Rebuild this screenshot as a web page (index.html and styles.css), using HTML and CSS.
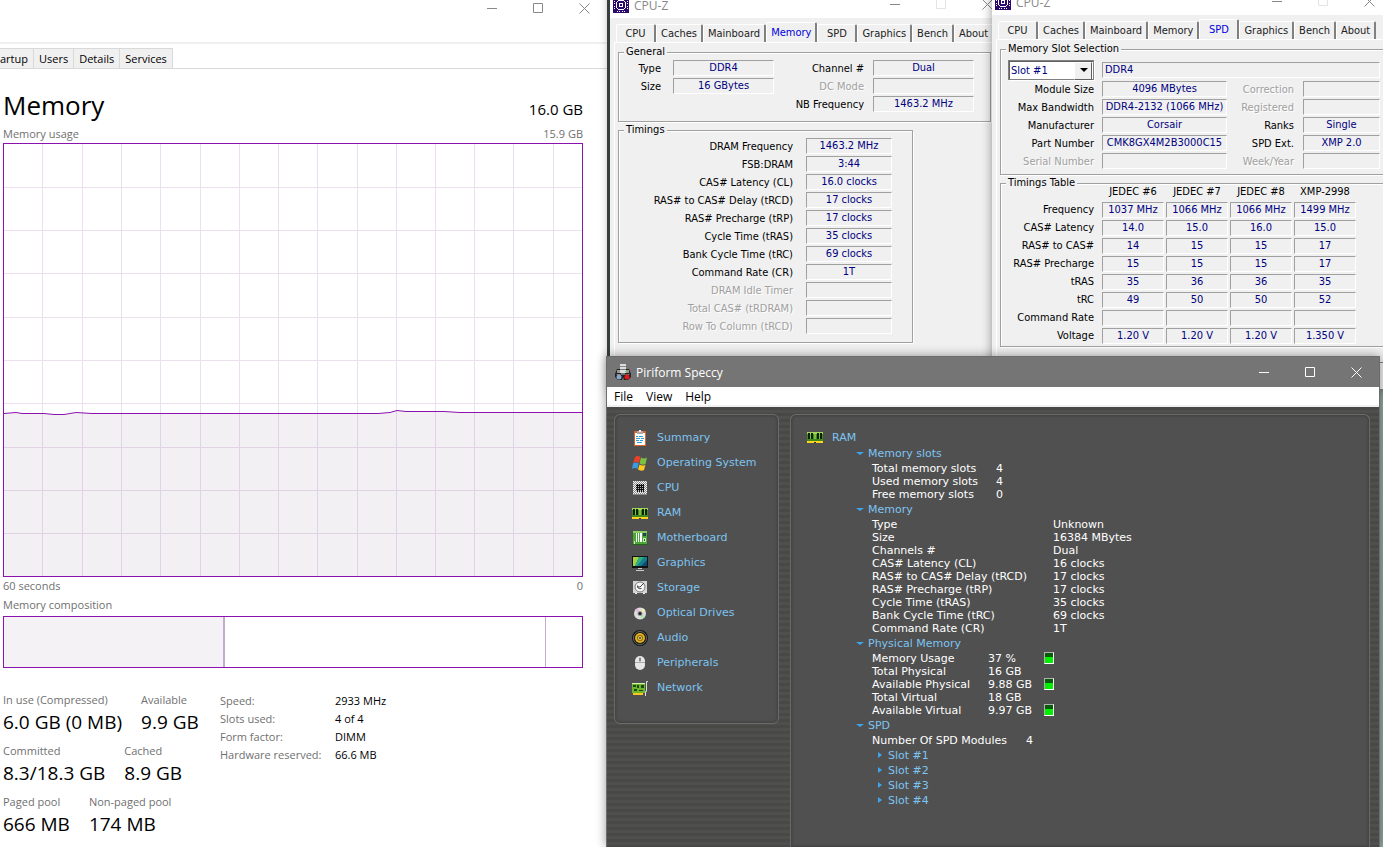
FILE: index.html
```html
<!DOCTYPE html>
<html lang="en">
<head>
    <meta charset="UTF-8">
    <meta name="viewport" content="width=device-width, initial-scale=1.0">
    <title>Memory</title>
    <link rel="stylesheet" href="styles.css">
</head>
<body>
<svg class="defs" aria-hidden="true">
    <symbol id="ram" viewBox="0 0 16 16">
        <path fill="#3f8a1e" d="M0 3h16v9H0z"/>
        <path fill="#a4d45a" d="M0 3h16v2H0z"/>
        <path fill="#7cc03e" d="M3 5h1v5H3zM7 5h2v5H7zM12 5h1v5h-1z"/>
        <path fill="#0d2008" d="M1 4h2v6H1zM4 4h2v6H4zM10 4h2v6h-2zM13 4h2v6h-2z"/>
        <path fill="#ffd21c" d="M0 12h16v2H0z"/>
        <path fill="#333" d="M7 13h2v1H7z"/>
    </symbol>
    <symbol id="chip" viewBox="0 0 16 16">
        <path fill="#2b0a6b" d="M0 0h16v16H0z"/>
        <path fill="#fff" d="M5 3h6v1H5zM5 12h6v1H5zM3 5h1v6H3zM12 5h1v6h-1zM4 4h1v1H4zM11 4h1v1h-1zM4 11h1v1H4zM11 11h1v1h-1z"/>
        <path fill="#fff" d="M6 6h4v4H6z"/>
        <path fill="#2b0a6b" d="M7 7h2v2H7z"/>
        <path fill="#fff" d="M4 1h1v1H4zM6 1h1v1H6zM9 1h1v1H9zM11 1h1v1h-1zM4 14h1v1H4zM6 14h1v1H6zM9 14h1v1H9zM11 14h1v1h-1zM1 4h1v1H1zM1 6h1v1H1zM1 9h1v1H1zM1 11h1v1H1zM14 4h1v1h-1zM14 6h1v1h-1zM14 9h1v1h-1zM14 11h1v1h-1z"/>
    </symbol>
    <symbol id="min" viewBox="0 0 11 11"><path stroke="currentColor" d="M0 5.500h10"/></symbol>
    <symbol id="max" viewBox="0 0 11 11"><path fill="none" stroke="currentColor" d="M.5.5h9v9h-9z"/></symbol>
    <symbol id="close" viewBox="0 0 11 11"><path stroke="currentColor" d="M.5.5l10 10M10.500.5l-10 10"/></symbol>
</svg>

<main class="desktop">
    <!-- Task manager -->
    <section class="window taskmgr">
        <div class="captions">
            <button class="caption" aria-label="Minimize"><svg><use href="#min"/></svg></button>
            <button class="caption" aria-label="Maximize"><svg><use href="#max"/></svg></button>
            <button class="caption" aria-label="Close"><svg><use href="#close"/></svg></button>
        </div>
        <nav class="tm-tabs">
            <button class="tm-tab first">artup</button>
            <button class="tm-tab">Users</button>
            <button class="tm-tab">Details</button>
            <button class="tm-tab">Services</button>
        </nav>
        <div class="tm-body">
            <header class="tm-head"><h1>Memory</h1><span>16.0 GB</span></header>
            <div class="tm-caption"><span>Memory usage</span><span>15.9 GB</span></div>
            <svg class="chart" viewBox="0 0 578 432" preserveAspectRatio="none">
                <path class="grid" d="M38.500 0v432M78.500 0v432M117.500 0v432M156.500 0v432M196.500 0v432M235.500 0v432M274.500 0v432M313.500 0v432M353.500 0v432M392.500 0v432M431.500 0v432M470.500 0v432M509.500 0v432M549.500 0v432M0 43.500h578M0 86.500h578M0 129.500h578M0 173.500h578M0 216.500h578M0 259.500h578M0 303.500h578M0 346.500h578M0 389.500h578"/>
                <path class="area" d="M0 269.500L12 268.500 18 269.500H40L50 270.500H60L72 268.500 88 269.500H374L386 268.500 393 266.500 402 267.500H440L456 268.500H578V432H0z"/>
                <path class="line" d="M0 269.500L12 268.500 18 269.500H40L50 270.500H60L72 268.500 88 269.500H374L386 268.500 393 266.500 402 267.500H440L456 268.500H578"/>
            </svg>
            <div class="tm-caption"><span>60 seconds</span><span>0</span></div>
            <div class="tm-caption below"><span>Memory composition</span></div>
            <div class="composition"><i class="used"></i><i class="standby"></i><i class="free"></i></div>
            <div class="tm-details">
                <div class="stats">
                    <div class="stat-row">
                        <p><span>In use (Compressed)</span><b>6.0 GB (0 MB)</b></p>
                        <p><span>Available</span><b>9.9 GB</b></p>
                    </div>
                    <div class="stat-row">
                        <p><span>Committed</span><b>8.3/18.3 GB</b></p>
                        <p><span>Cached</span><b>8.9 GB</b></p>
                    </div>
                    <div class="stat-row">
                        <p><span>Paged pool</span><b>666 MB</b></p>
                        <p><span>Non-paged pool</span><b>174 MB</b></p>
                    </div>
                </div>
                <dl class="hardware">
                    <dt>Speed:</dt><dd>2933 MHz</dd>
                    <dt>Slots used:</dt><dd>4 of 4</dd>
                    <dt>Form factor:</dt><dd>DIMM</dd>
                    <dt>Hardware reserved:</dt><dd>66.6 MB</dd>
                </dl>
            </div>
        </div>
    </section>

    <!-- CPU-Z, Memory tab -->
    <section class="window cpuz cpuz-memory">
        <header class="cz-title">
            <svg class="icon"><use href="#chip"/></svg><span>CPU-Z</span>
            <div class="captions">
                <button class="caption" aria-label="Minimize"><svg><use href="#min"/></svg></button>
                <button class="caption" aria-label="Maximize" disabled><svg><use href="#max"/></svg></button>
                <button class="caption" aria-label="Close"><svg><use href="#close"/></svg></button>
            </div>
        </header>
        <nav class="cz-tabs">
            <button>CPU</button><button>Caches</button><button>Mainboard</button><button class="active">Memory</button><button>SPD</button><button>Graphics</button><button>Bench</button><button>About</button>
        </nav>
        <div class="pane">
            <fieldset class="general">
                <legend>General</legend>
                <dl class="fields">
                    <dt>Type</dt><dd>DDR4</dd>
                    <dt>Size</dt><dd>16 GBytes</dd>
                </dl>
                <dl class="fields">
                    <dt>Channel #</dt><dd>Dual</dd>
                    <dt class="off">DC Mode</dt><dd></dd>
                    <dt>NB Frequency</dt><dd>1463.2 MHz</dd>
                </dl>
            </fieldset>
            <fieldset class="timings">
                <legend>Timings</legend>
                <dl class="fields">
                    <dt>DRAM Frequency</dt><dd>1463.2 MHz</dd>
                    <dt>FSB:DRAM</dt><dd>3:44</dd>
                    <dt>CAS# Latency (CL)</dt><dd>16.0 clocks</dd>
                    <dt>RAS# to CAS# Delay (tRCD)</dt><dd>17 clocks</dd>
                    <dt>RAS# Precharge (tRP)</dt><dd>17 clocks</dd>
                    <dt>Cycle Time (tRAS)</dt><dd>35 clocks</dd>
                    <dt>Bank Cycle Time (tRC)</dt><dd>69 clocks</dd>
                    <dt>Command Rate (CR)</dt><dd>1T</dd>
                    <dt class="off">DRAM Idle Timer</dt><dd></dd>
                    <dt class="off">Total CAS# (tRDRAM)</dt><dd></dd>
                    <dt class="off">Row To Column (tRCD)</dt><dd></dd>
                </dl>
            </fieldset>
        </div>
    </section>

    <!-- CPU-Z, SPD tab -->
    <section class="window cpuz cpuz-spd">
        <header class="cz-title">
            <svg class="icon"><use href="#chip"/></svg><span>CPU-Z</span>
            <div class="captions">
                <button class="caption" aria-label="Minimize"><svg><use href="#min"/></svg></button>
                <button class="caption" aria-label="Maximize" disabled><svg><use href="#max"/></svg></button>
                <button class="caption" aria-label="Close"><svg><use href="#close"/></svg></button>
            </div>
        </header>
        <nav class="cz-tabs">
            <button>CPU</button><button>Caches</button><button>Mainboard</button><button>Memory</button><button class="active">SPD</button><button>Graphics</button><button>Bench</button><button>About</button>
        </nav>
        <div class="pane">
            <fieldset class="slot">
                <legend>Memory Slot Selection</legend>
                <div class="slot-pick">
                    <span class="select">
                        <select aria-label="Memory slot"><option>Slot #1</option><option>Slot #2</option><option>Slot #3</option><option>Slot #4</option></select>
                    </span>
                    <output class="module">DDR4</output>
                </div>
                <div class="slot-info">
                    <dl class="fields">
                        <dt>Module Size</dt><dd>4096 MBytes</dd>
                        <dt>Max Bandwidth</dt><dd>DDR4-2132 (1066 MHz)</dd>
                        <dt>Manufacturer</dt><dd>Corsair</dd>
                        <dt>Part Number</dt><dd>CMK8GX4M2B3000C15</dd>
                        <dt class="off">Serial Number</dt><dd></dd>
                    </dl>
                    <dl class="fields">
                        <dt class="off">Correction</dt><dd></dd>
                        <dt class="off">Registered</dt><dd></dd>
                        <dt>Ranks</dt><dd>Single</dd>
                        <dt>SPD Ext.</dt><dd>XMP 2.0</dd>
                        <dt class="off">Week/Year</dt><dd></dd>
                    </dl>
                </div>
            </fieldset>
            <fieldset class="spd">
                <legend>Timings Table</legend>
                <table>
                    <tr><td></td><th>JEDEC #6</th><th>JEDEC #7</th><th>JEDEC #8</th><th>XMP-2998</th></tr>
                    <tr><th>Frequency</th><td>1037 MHz</td><td>1066 MHz</td><td>1066 MHz</td><td>1499 MHz</td></tr>
                    <tr><th>CAS# Latency</th><td>14.0</td><td>15.0</td><td>16.0</td><td>15.0</td></tr>
                    <tr><th>RAS# to CAS#</th><td>14</td><td>15</td><td>15</td><td>17</td></tr>
                    <tr><th>RAS# Precharge</th><td>15</td><td>15</td><td>15</td><td>17</td></tr>
                    <tr><th>tRAS</th><td>35</td><td>36</td><td>36</td><td>35</td></tr>
                    <tr><th>tRC</th><td>49</td><td>50</td><td>50</td><td>52</td></tr>
                    <tr><th>Command Rate</th><td></td><td></td><td></td><td></td></tr>
                    <tr><th>Voltage</th><td>1.20 V</td><td>1.20 V</td><td>1.20 V</td><td>1.350 V</td></tr>
                </table>
            </fieldset>
        </div>
    </section>

    <!-- Speccy -->
    <section class="window speccy">
        <header class="sp-title">
            <svg class="icon" viewBox="0 0 16 16">
                <path fill="#ddd" d="M5 0h6v5H5z"/><path fill="#888" d="M5 2h6v1H5z"/>
                <path fill="#222" d="M2 5h12l2 5v3l-3 3H9l-1-3-1 3H3l-3-3v-3z"/>
                <path fill="#999" d="M2 6h3v3H2zM11 6h3v3h-3z"/>
                <path fill="#ddd" d="M5 4h6v5H5z"/><path fill="#777" d="M5 5h6v1H5zM6 9h4v2H6z"/>
                <path fill="none" stroke="#777" d="M1.500 10.500h4M10.500 10.500h4"/>
                <circle cx="4" cy="13" r="2.500" fill="#8aa6d0"/><circle cx="12" cy="13" r="2.500" fill="#e01818"/>
                <path fill="#3f3" d="M10 7h1v1h-1z"/>
            </svg>
            <span>Piriform Speccy</span>
            <div class="captions">
                <button class="caption" aria-label="Minimize"><svg><use href="#min"/></svg></button>
                <button class="caption" aria-label="Maximize"><svg><use href="#max"/></svg></button>
                <button class="caption" aria-label="Close"><svg><use href="#close"/></svg></button>
            </div>
        </header>
        <nav class="sp-menu"><button>File</button><button>View</button><button>Help</button></nav>
        <div class="sp-body">
            <nav class="sp-nav">
                <a href="#"><svg class="icon" viewBox="0 0 16 16"><path fill="#d9652b" d="M2 1h12v15H2z"/><path fill="#fff" d="M3 3h10v12H3z"/><path fill="#aaa" d="M5 1h6v3H5z"/><path fill="#eee" d="M7 0h2v2H7z"/><path stroke="#2a9fd8" d="M4 6.500h2M7 6.500h4M4 8.500h4M9 8.500h3M4 10.500h3M8 10.500h3M5 12.500h5"/></svg>Summary</a>
                <a href="#"><svg class="icon" viewBox="0 0 16 16"><path fill="#e8402a" d="M3 2q3-2 5.500 0L7 8Q4 6 1 8z"/><path fill="#7cc242" d="M9 2.500q3 2 6 0L13.500 9Q10 10.500 7.500 8.500z"/><path fill="#3b9be0" d="M1 8.500q3-2 5.700 0L5.500 14Q3 12 0 14z"/><path fill="#ffc91f" d="M7.500 9.500q3 2 6 .2L12 15q-3 1.500-6-.5z"/></svg>Operating System</a>
                <a href="#"><svg class="icon" viewBox="0 0 16 16"><path fill="#8a8a8a" d="M1 1h14v14H1z"/><path stroke="#f4f4f4" stroke-dasharray="1 1" d="M1 1.500h14M2 2.500h13M1 3.500h14M2 4.500h13M1 5.500h14M2 6.500h13M1 7.500h14M2 8.500h13M1 9.500h14M2 10.500h13M1 11.500h14M2 12.500h13M1 13.500h14"/><path fill="#bbb" d="M4 4h8v8H4z"/><path stroke="#111" d="M5.500 4v8M7.500 4v8M9.500 4v8M11.500 4v8M4 5.500h8M4 7.500h8M4 9.500h8"/></svg>CPU</a>
                <a href="#"><svg class="icon"><use href="#ram"/></svg>RAM</a>
                <a href="#"><svg class="icon" viewBox="0 0 16 16"><path fill="#4aa838" d="M1 1h14v14H1z"/><path fill="#89d062" d="M1 1h14v2H1z"/><path fill="#fff" d="M4 3h1v9H4zM6 3h1v9H6zM8 3h2v9H8z"/><path fill="#245" d="M11 3h3v3h-3z"/><path fill="#cfe8c0" d="M11 8h3v4h-3zM2 11h1v3H2z"/><path fill="#1f6617" d="M1 14h14v1H1zM12 9h1v2h-1z"/></svg>Motherboard</a>
                <a href="#"><svg class="icon" viewBox="0 0 16 16"><path fill="#111" d="M0 1h16v12H0z"/><path fill="#147f8f" d="M1 2h14v9H1z"/><path fill="#a8cf45" d="M1 2h6L3 11H1z"/><path fill="#2fae7d" d="M7 2h5l-7 9H3z"/><path fill="#0b4a72" d="M15 5v6H9z"/><path fill="#ccc" d="M6 13h4v1H6zM4 15h8v1H4z"/></svg>Graphics</a>
                <a href="#"><svg class="icon" viewBox="0 0 16 16"><path fill="#d5d5d5" d="M1 1h14v13H1z"/><path fill="#555" d="M1 13h14v2H1z"/><circle cx="8" cy="7" r="5" fill="#f6f6f6" stroke="#777"/><path fill="none" stroke="#444" d="M12 3L8 7H5M5.500 5.500q0 4 4 3"/><path fill="#eee" d="M3 13h2v1H3zM11 13h2v1h-2z"/></svg>Storage</a>
                <a href="#"><svg class="icon" viewBox="0 0 16 16"><circle cx="8" cy="8.500" r="6" fill="#ddd"/><path fill="#e9b7e0" d="M8 8.500L3 5l3-2.300z"/><path fill="#f4efae" d="M8 8.500L11 3l2.500 3z"/><path fill="#a9e6b0" d="M8 8.500l5 3-3 3z"/><circle cx="8" cy="8.500" r="2.500" fill="#999"/><circle cx="8" cy="8.500" r="1.500" fill="#222"/></svg>Optical Drives</a>
                <a href="#"><svg class="icon" viewBox="0 0 16 16"><circle cx="8" cy="8" r="8" fill="#151515"/><circle cx="8" cy="8" r="6.500" fill="none" stroke="#666"/><circle cx="8" cy="8" r="5" fill="#e2b01c"/><circle cx="8" cy="8" r="3" fill="#8a640a"/><circle cx="8" cy="8" r="2" fill="#f6d860"/><circle cx="8" cy="8" r="1" fill="#333"/></svg>Audio</a>
                <a href="#"><svg class="icon" viewBox="0 0 16 16"><rect x="3" y="1" width="10" height="14" rx="5" fill="#e6e6e6"/><path fill="none" stroke="#aaa" d="M3 7.500h10M8 2v5"/><path fill="#888" d="M7 3h2v3H7z"/></svg>Peripherals</a>
                <a href="#"><svg class="icon" viewBox="0 0 16 16"><path fill="#6db52d" d="M0 3h13v10H0z"/><path fill="#1c4a10" d="M1 5h3v2H1zM5 5h2v3H5zM9 5h3v3H9zM2 9h3v2H2zM7 10h4v1H7z"/><path fill="#ffc81c" d="M1 13h10v2H1z"/><path fill="none" stroke="#ddd" d="M16 1.500h-1.500v10h-1V16"/><path fill="#d9f0b0" d="M0 3h13v1H0z"/></svg>Network</a>
            </nav>
            <div class="sp-main">
                <h2><svg class="icon"><use href="#ram"/></svg>RAM</h2>
                <div class="tree">
                    <h3>Memory slots</h3>
                    <dl class="slots">
                        <dt>Total memory slots</dt><dd>4</dd>
                        <dt>Used memory slots</dt><dd>4</dd>
                        <dt>Free memory slots</dt><dd>0</dd>
                    </dl>
                    <h3>Memory</h3>
                    <dl class="memory">
                        <dt>Type</dt><dd>Unknown</dd>
                        <dt>Size</dt><dd>16384 MBytes</dd>
                        <dt>Channels #</dt><dd>Dual</dd>
                        <dt>CAS# Latency (CL)</dt><dd>16 clocks</dd>
                        <dt>RAS# to CAS# Delay (tRCD)</dt><dd>17 clocks</dd>
                        <dt>RAS# Precharge (tRP)</dt><dd>17 clocks</dd>
                        <dt>Cycle Time (tRAS)</dt><dd>35 clocks</dd>
                        <dt>Bank Cycle Time (tRC)</dt><dd>69 clocks</dd>
                        <dt>Command Rate (CR)</dt><dd>1T</dd>
                    </dl>
                    <h3>Physical Memory</h3>
                    <dl class="physical">
                        <dt>Memory Usage</dt><dd>37 %</dd><dd><i class="gauge"></i></dd>
                        <dt>Total Physical</dt><dd>16 GB</dd><dd></dd>
                        <dt>Available Physical</dt><dd>9.88 GB</dd><dd><i class="gauge"></i></dd>
                        <dt>Total Virtual</dt><dd>18 GB</dd><dd></dd>
                        <dt>Available Virtual</dt><dd>9.97 GB</dd><dd><i class="gauge"></i></dd>
                    </dl>
                    <h3>SPD</h3>
                    <dl class="modules"><dt>Number Of SPD Modules</dt><dd>4</dd></dl>
                    <ul>
                        <li><a href="#">Slot #1</a></li>
                        <li><a href="#">Slot #2</a></li>
                        <li><a href="#">Slot #3</a></li>
                        <li><a href="#">Slot #4</a></li>
                    </ul>
                </div>
            </div>
        </div>
    </section>
</main>
</body>
</html>
```
FILE: styles.css
```css
* {
    box-sizing: border-box;
    margin: 0;
    padding: 0;
}
body {
    font-family: "Open Sans", "Noto Sans", sans-serif;
    font-size: 12px;
    overflow: hidden;
}
button {
    font: inherit;
    color: inherit;
    background: none;
    border: 0;
}
a {
    color: inherit;
    text-decoration: none;
}
h1, h2, h3, th, b {
    font-weight: normal;
}
ul {
    list-style: none;
}
.defs {
    position: absolute;
    width: 0;
    height: 0;
}
.icon {
    width: 16px;
    height: 16px;
    flex: none;
}
.desktop {
    position: relative;
    height: 100vh;
    overflow: hidden;
    background: linear-gradient(90deg, #4c5a5b 50%, #93a5a3 90%);
}
.window {
    position: absolute;
    box-shadow: 0 0 10px rgba(0, 0, 0, 0.4);
}

/* window buttons */
.captions {
    display: flex;
    margin-left: auto;
}
.caption {
    width: 46px;
    height: 30px;
    display: grid;
    place-items: center;
}
.caption svg {
    width: 11px;
    height: 11px;
}
.caption:disabled {
    color: #e4e4e4;
}

/* task manager */
.taskmgr {
    left: 0;
    right: 776px;
    top: -7px;
    bottom: 0;
    background: #fff;
    color: #000;
    font-size: 11px;
}
.taskmgr .captions {
    justify-content: flex-end;
    height: 51px;
    border-bottom: 2px solid #f0f0f0;
    color: #888;
}
.tm-tabs {
    display: flex;
    height: 25px;
    padding-top: 4px;
    border-bottom: 1px solid #d9d9d9;
}
.tm-tab {
    height: 20px;
    padding: 0 5px;
    background: #f0f0f0;
    border: 1px solid #d9d9d9;
    border-left: 0;
    border-bottom: 0;
}
.tm-tab.first {
    padding-left: 0;
}
.tm-body {
    padding: 18px 24px 0 3px;
}
.tm-head {
    display: flex;
    justify-content: space-between;
    align-items: baseline;
    padding-bottom: 2px;
}
.tm-head h1 {
    font-size: 26px;
    line-height: 36px;
}
.tm-head span {
    font-size: 15px;
    line-height: 20px;
}
.tm-caption {
    display: flex;
    justify-content: space-between;
    line-height: 18px;
    color: #707070;
}
.tm-caption.below {
    line-height: 19px;
}
.chart {
    display: block;
    width: 100%;
    height: 434px;
    border: 1px solid #8b12ae;
}
.chart path {
    fill: none;
    shape-rendering: crispEdges;
}
.chart .grid {
    stroke: #ecdff0;
}
.chart .area {
    fill: rgba(100, 70, 110, 0.08);
}
.chart .line {
    stroke: #8b12ae;
    shape-rendering: auto;
}
.composition {
    display: flex;
    height: 52px;
    margin-top: 2px;
    border: 1px solid #8b12ae;
}
.composition .used {
    width: 221px;
    background: #f4f2f4;
    border-right: 2px solid #c8a8d0;
}
.composition .standby {
    flex: 1;
    border-right: 1px solid #c8a8d0;
}
.composition .free {
    width: 36px;
}
.tm-details {
    display: flex;
    margin-top: 24px;
}
.stats {
    width: 217px;
}
.stat-row {
    display: flex;
    gap: 19px;
    margin-bottom: 7px;
}
.stat-row p {
    white-space: nowrap;
}
.stat-row span, .stat-row b {
    display: block;
}
.stat-row span {
    line-height: 16px;
    color: #707070;
}
.stat-row b {
    font-size: 19px;
    line-height: 28px;
}
.hardware {
    display: grid;
    grid-template-columns: 115px auto;
    align-content: start;
    line-height: 18px;
}
.hardware dt {
    color: #707070;
    white-space: nowrap;
}

/* CPU-Z */
.cpuz {
    width: 400px;
    height: 405px;
    background: #f0f0f0;
    font-family: "DejaVu Sans Condensed", "DejaVu Sans", sans-serif;
    font-size: 11px;
}
.cpuz-memory {
    top: -13px;
    right: 373px;
}
.cpuz-spd {
    top: -16px;
    right: -9px;
}
.cz-title {
    display: flex;
    align-items: center;
    height: 31px;
    padding: 4px 0 0 3px;
    gap: 5px;
    background: #fff;
    color: #888;
    font-family: "Open Sans", sans-serif;
    font-size: 12px;
}
.cz-title span {
    padding-top: 2px;
}
.cz-tabs {
    display: flex;
    align-items: flex-end;
    height: 24px;
    padding-left: 6px;
}
.cz-tabs button {
    min-width: 40px;
    height: 18px;
    padding: 0 4px;
    color: #222;
    border: 1px solid #fff;
    border-right: 2px solid #808080;
    border-bottom: 0;
    border-radius: 2px 2px 0 0;
}
.cz-tabs .active {
    height: 20px;
    color: #0000e0;
}
.pane {
    margin-left: 4px;
    height: 324px;
    padding: 2px 0 0 3px;
    border: 1px solid #fff;
    border-bottom-color: #808080;
}
fieldset {
    border: 1px solid #a0a0a0;
    box-shadow: 1px 1px 0 #fff, inset 1px 1px 0 #fff;
}
legend {
    margin-left: 5px;
    padding: 0 2px;
    line-height: 14px;
    background: #f0f0f0;
}
.fields {
    display: grid;
    grid-auto-rows: 16px;
    align-content: start;
    row-gap: 2px;
    line-height: 17px;
    text-align: right;
    white-space: nowrap;
}
.fields dd, .module, .spd td {
    line-height: 14px;
    text-align: center;
    color: #00007f;
    border: 1px solid #a0a0a0;
    border-right-color: #fff;
    border-bottom-color: #fff;
}
.off {
    color: #a0a0a0;
    text-shadow: 1px 1px 0 #fff;
}
.general {
    display: flex;
    justify-content: space-between;
    width: 373px;
    height: 77px;
    padding: 1px 16px 0 0;
}
.general .fields {
    grid-template-columns: 42px 101px;
    column-gap: 12px;
}
.general .fields + .fields {
    grid-template-columns: auto 101px;
    column-gap: 9px;
}
.timings {
    width: 295px;
    margin-top: 1px;
    padding: 1px 20px 8px 0;
}
.timings .fields {
    grid-template-columns: 1fr 86px;
    column-gap: 13px;
}
.slot {
    height: 133px;
    padding-top: 4px;
}
.slot-pick {
    display: flex;
    align-items: center;
    gap: 8px;
    margin: 0 10px 0 7px;
}
.select {
    position: relative;
    width: 86px;
    height: 20px;
    background: #fff;
    border: 1px solid #808080;
    box-shadow: inset 1px 1px 0 #606060, 1px 1px 0 #fff;
}
.select select {
    appearance: none;
    width: 100%;
    height: 100%;
    padding-left: 2px;
    border: 0;
    background: none;
    font: inherit;
    color: #00007f;
}
.select::before {
    content: "";
    position: absolute;
    top: 1px;
    right: 1px;
    width: 16px;
    height: 16px;
    background: #f0f0f0;
    border: 1px solid #fff;
    border-right-color: #606060;
    border-bottom-color: #606060;
    pointer-events: none;
}
.select::after {
    content: "";
    position: absolute;
    top: 7px;
    right: 5px;
    border: 4px solid transparent;
    border-top-color: #000;
    border-bottom: 0;
    pointer-events: none;
}
.module {
    flex: 1;
    height: 16px;
    padding-left: 2px;
    text-align: left;
}
.slot-info {
    display: flex;
    justify-content: space-between;
    margin: 1px 10px 0 7px;
}
.slot-info .fields {
    grid-template-columns: 86px 125px;
    column-gap: 8px;
}
.slot-info .fields + .fields {
    grid-template-columns: auto 77px;
    column-gap: 9px;
}
.spd {
    margin-top: 1px;
}
.spd table {
    margin-top: -8px;
    border-spacing: 2px;
    line-height: 14px;
}
.spd tr {
    height: 16px;
}
.spd th {
    width: 62px;
    white-space: nowrap;
}
.spd th:first-child {
    width: 97px;
    padding-right: 6px;
    text-align: right;
}
.spd tr:first-child td {
    border: 0;
}

/* Speccy */
.speccy {
    top: 356px;
    right: 3px;
    bottom: 0;
    width: 774px;
    display: flex;
    flex-direction: column;
    border: 1px solid #6c6c6c;
    border-bottom: 0;
    color: #fff;
}
.sp-title {
    display: flex;
    align-items: center;
    gap: 5px;
    height: 30px;
    padding-left: 8px;
    background: #757575;
}
.sp-menu {
    display: flex;
    gap: 13px;
    height: 20px;
    padding-left: 7px;
    background: #fff;
    border-bottom: 2px solid #f0f0f0;
    color: #000;
}
.sp-body {
    flex: 1;
    display: flex;
    align-items: flex-start;
    gap: 11px;
    padding: 7px 9px 0 7px;
    background: repeating-linear-gradient(#484946 0 3px, #4f504d 3px 6px);
    font-family: "DejaVu Sans", Verdana, sans-serif;
    font-size: 11px;
}
.sp-nav, .sp-main {
    background: #505050;
    border: 1px solid #6a6a6a;
    border-radius: 6px;
    box-shadow: inset 0 0 3px 1px #404040;
}
.sp-nav {
    width: 165px;
    height: 310px;
    padding: 10px 17px;
    color: #7cc4f2;
}
.sp-nav a {
    display: flex;
    align-items: center;
    gap: 9px;
    height: 25px;
    white-space: nowrap;
}
.sp-main {
    flex: 1;
    align-self: stretch;
    padding: 14px 16px 0;
    border-bottom: 0;
    border-radius: 6px 6px 0 0;
}
.sp-main h2 {
    display: flex;
    align-items: center;
    gap: 9px;
    height: 16px;
    font-size: 11px;
    color: #7cc4f2;
}
.tree {
    padding-left: 65px;
    line-height: 13px;
}
.tree h3 {
    position: relative;
    margin-left: -4px;
    font-size: 11px;
    line-height: 17px;
    color: #7cc4f2;
}
.tree h3::before, .tree li::before {
    content: "";
    position: absolute;
    left: -12px;
    top: 7px;
    border: 4px solid transparent;
    border-top: 3px solid #3fa4ec;
    border-bottom: 0;
}
.tree dl {
    display: grid;
    grid-auto-rows: 13px;
    white-space: nowrap;
}
.tree .slots {
    grid-template-columns: 124px auto;
}
.tree .memory {
    grid-template-columns: 181px auto;
}
.tree .physical {
    grid-template-columns: 116px 56px auto;
}
.tree .modules {
    grid-template-columns: 154px auto;
}
.gauge {
    display: block;
    width: 10px;
    height: 12px;
    border: 1px solid #b0b0b0;
    border-right-color: #fff;
    border-bottom-color: #fff;
    background: linear-gradient(#075c07 40%, #00f000 40%);
}
.tree ul {
    padding: 1px 0 0 16px;
    line-height: 15px;
    color: #7cc4f2;
}
.tree li {
    position: relative;
}
.tree li::before {
    left: -10px;
    top: 4px;
    border: 3px solid transparent;
    border-left: 4px solid #3fa4ec;
    border-right: 0;
}
```
